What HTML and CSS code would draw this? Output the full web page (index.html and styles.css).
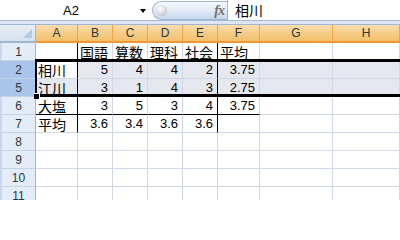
FILE: index.html
```html
<!DOCTYPE html>
<html lang="ja">
<head>
<meta charset="utf-8">
<link rel="stylesheet" href="styles.css">
</head>
<body>
<div class="formula-bar">
  <div class="name-box"><span class="name">A2</span><span class="arrow"></span></div>
  <div class="fx-pill"><span class="knob"></span><span class="fx">fx</span></div>
  <div class="formula-input">相川</div>
</div>
<div class="bar-gap"></div>
<div class="sheet-wrap">
<div class="sheet">
  <div class="corner"><span class="tri"></span></div>
  <div class="col-h">A</div><div class="col-h">B</div><div class="col-h">C</div><div class="col-h">D</div><div class="col-h">E</div><div class="col-h">F</div><div class="col-h">G</div><div class="col-h">H</div>

  <div class="row-h">1</div>
  <div class="cell bl-r bl-b"></div>
  <div class="cell txt bl-b">国語</div><div class="cell txt bl-b">算数</div><div class="cell txt bl-b">理科</div><div class="cell txt bl-b bl-r">社会</div>
  <div class="cell txt bl-b">平均</div><div class="cell"></div><div class="cell"></div>

  <div class="row-h sel">2</div>
  <div class="cell txt bl-r active">相川</div>
  <div class="cell num sr">5</div><div class="cell num sr">4</div><div class="cell num sr">4</div><div class="cell num sr bl-r">2</div>
  <div class="cell num sr">3.75</div><div class="cell sr"></div><div class="cell sr"></div>

  <div class="row-h sel">5</div>
  <div class="cell txt bl-r sr">江川</div>
  <div class="cell num sr">3</div><div class="cell num sr">1</div><div class="cell num sr">4</div><div class="cell num sr bl-r">3</div>
  <div class="cell num sr">2.75</div><div class="cell sr"></div><div class="cell sr"></div>

  <div class="row-h">6</div>
  <div class="cell txt bl-r bl-b">大塩</div>
  <div class="cell num bl-b">3</div><div class="cell num bl-b">5</div><div class="cell num bl-b">3</div><div class="cell num bl-b bl-r">4</div>
  <div class="cell num bl-b">3.75</div><div class="cell"></div><div class="cell"></div>

  <div class="row-h">7</div>
  <div class="cell txt bl-r">平均</div>
  <div class="cell num">3.6</div><div class="cell num">3.4</div><div class="cell num">3.6</div><div class="cell num bl-r">3.6</div>
  <div class="cell"></div><div class="cell"></div><div class="cell"></div>

  <div class="row-h">8</div>
  <div class="cell"></div><div class="cell"></div><div class="cell"></div><div class="cell"></div><div class="cell"></div><div class="cell"></div><div class="cell"></div><div class="cell"></div>
  <div class="row-h">9</div>
  <div class="cell"></div><div class="cell"></div><div class="cell"></div><div class="cell"></div><div class="cell"></div><div class="cell"></div><div class="cell"></div><div class="cell"></div>
  <div class="row-h">10</div>
  <div class="cell"></div><div class="cell"></div><div class="cell"></div><div class="cell"></div><div class="cell"></div><div class="cell"></div><div class="cell"></div><div class="cell"></div>
  <div class="row-h">11</div>
  <div class="cell"></div><div class="cell"></div><div class="cell"></div><div class="cell"></div><div class="cell"></div><div class="cell"></div><div class="cell"></div><div class="cell"></div>
</div>
<div class="selection"></div>
<div class="fill-handle"></div>
</div>
</body>
</html>
```
FILE: styles.css
```css
html, body {
  margin: 0;
  padding: 0;
  width: 400px;
  height: 200px;
  overflow: hidden;
  background: #fff;
}

.formula-bar {
  display: flex;
  height: 20px;
  border-bottom: 1px solid #a7b9d2;
  background: #fff;
}

.name-box {
  width: 152px;
  display: flex;
  align-items: center;
}

.name {
  flex: 1;
  text-align: center;
  font: 13px "Liberation Sans", Arial, sans-serif;
  color: #000;
  padding-left: 6px;
}

.arrow {
  width: 0;
  height: 0;
  border-left: 3.5px solid transparent;
  border-right: 3.5px solid transparent;
  border-top: 4px solid #000;
  margin-right: 6px;
  margin-left: 4px;
  margin-top: 1px;
}

.fx-pill {
  width: 75px;
  box-sizing: border-box;
  margin-top: 1px;
  height: 19px;
  display: flex;
  align-items: center;
  justify-content: space-between;
  border: 1px solid #9fb5d2;
  border-right: none;
  border-radius: 10px 0 0 10px;
  background: linear-gradient(#f6f9fd, #dfe8f5 55%, #c7d7ec);
}

.knob {
  width: 11px;
  height: 11px;
  margin-left: 3px;
  border-radius: 50%;
  background: radial-gradient(circle at 40% 35%, #ffffff, #c9ced6 70%, #a8aeb8);
}

.fx {
  font: italic bold 14px "Liberation Serif", "Times New Roman", serif;
  color: #707070;
  margin-right: 3px;
  letter-spacing: -1px;
}

.formula-input {
  flex: 1;
  border-left: 1px solid #9fb5d2;
  padding-left: 7px;
  font: 14px "Noto Sans CJK JP", sans-serif;
  line-height: 20px;
  color: #000;
}

.bar-gap {
  height: 3px;
  background: #dce6f4;
}

.sheet-wrap {
  position: relative;
}

.sheet {
  display: grid;
  grid-template-columns: 36px 42px 35px 35px 35px 35px 42px 73px 1fr;
  grid-template-rows: 18px;
  grid-auto-rows: 18px;
  border-top: 1px solid #9eb6ce;
}

.corner {
  position: relative;
  box-sizing: border-box;
  background: linear-gradient(#e6edf7, #d6e1ef);
  border-right: 1px solid #9eb6ce;
  border-bottom: 2px solid #9eb6ce;
}

.tri {
  position: absolute;
  right: 3px;
  bottom: 3px;
  width: 0;
  height: 0;
  border-left: 9px solid transparent;
  border-bottom: 9px solid #b8c8dc;
}

.col-h {
  box-sizing: border-box;
  display: flex;
  align-items: center;
  justify-content: center;
  background: linear-gradient(#f9ddb0, #f5cd89 50%, #f1c06a);
  border-right: 1px solid #f2a24c;
  border-bottom: 2px solid #f29536;
  font: 12px "Liberation Sans", Arial, sans-serif;
  color: #27393d;
}

.row-h {
  box-sizing: border-box;
  display: flex;
  align-items: center;
  justify-content: center;
  background: #e4ecf7;
  border-left: 2px solid #c8d7ec;
  border-right: 1px solid #9eb6ce;
  border-bottom: 1px solid #c5d3e6;
  font: 12px "Liberation Sans", Arial, sans-serif;
  color: #27393d;
}

.row-h.sel {
  background: #abc5ea;
  border-left-color: #abc5ea;
}

.cell {
  box-sizing: border-box;
  display: flex;
  align-items: center;
  border-right: 1px solid #d0d7e5;
  border-bottom: 1px solid #d0d7e5;
  overflow: hidden;
  white-space: nowrap;
  color: #000;
}

.txt {
  padding-left: 2px;
  padding-top: 1px;
  font: 14px "Noto Sans CJK JP", sans-serif;
  line-height: 14px;
}

.num {
  justify-content: flex-end;
  padding-right: 4px;
  padding-top: 1px;
  font: 13px "Liberation Sans", Arial, sans-serif;
  line-height: 14px;
}

.sr {
  background: #e6e8ef;
}

.active {
  background: #fff;
}

.bl-r {
  border-right-color: #000;
}

.bl-b {
  border-bottom-color: #000;
}

.selection {
  position: absolute;
  left: 35px;
  top: 35px;
  width: 380px;
  height: 38px;
  border: 3px solid #000;
  border-left-width: 2px;
  box-sizing: border-box;
  pointer-events: none;
}

.fill-handle {
  position: absolute;
  left: 34px;
  top: 69px;
  width: 5px;
  height: 5px;
  background: #000;
  border: 1px solid #fff;
  border-bottom: none;
  border-left: none;
}
```
